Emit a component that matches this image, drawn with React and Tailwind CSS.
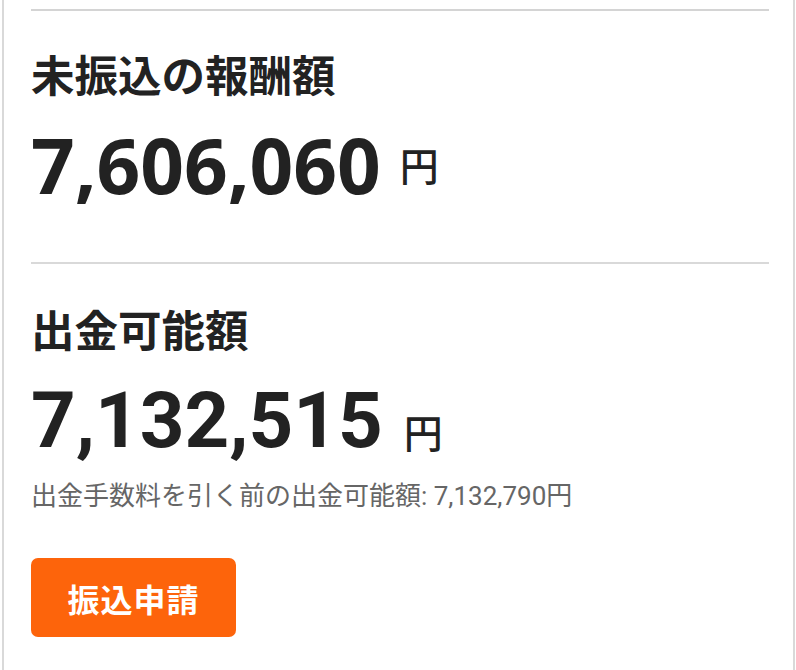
export default function App() {
  const cjk = { fontFamily: '"Noto Sans CJK JP", sans-serif' };
  return (
    <div className="w-[796px] h-[670px] bg-white overflow-hidden">
      <div className="ml-[2px] mr-[1px] h-full border-l-2 border-r-2 border-[#d9d9d9] pl-[27px] pr-[24px] pt-[9px]" style={cjk}>
        <div className="h-[2px] bg-[#d4d4d4]" />
        <div className="mt-[39px] text-[43.5px] leading-[48px] font-bold text-[#222]">未振込の報酬額</div>
        <div className="mt-[26px] flex items-end">
          <span className="text-[76.5px] leading-[80px] font-bold text-[#222]" style={{ fontFamily: '"Open Sans", sans-serif' }}>7,606,060</span>
          <span className="ml-[19px] mb-[16px] text-[39px] leading-[48px] font-medium text-[#222]">円</span>
        </div>
        <div className="mt-[58px] h-[2px] bg-[#d9d9d9]" />
        <div className="mt-[41px] text-[43.5px] leading-[48px] font-bold text-[#222]">出金可能額</div>
        <div className="mt-[28px] flex items-end">
          <span className="text-[78px] leading-[80px] font-bold text-[#222]" style={{ fontFamily: 'Roboto, sans-serif' }}>7,132,515</span>
          <span className="ml-[21px] mb-[6px] text-[39px] leading-[48px] font-medium text-[#222]">円</span>
        </div>
        <div className="mt-[17px] text-[26px] leading-[36px] text-[#666]" style={{ fontFamily: 'Roboto, "Noto Sans CJK JP", sans-serif' }}>出金手数料を引く前の出金可能額: 7,132,790円</div>
        <button className="mt-[44px] w-[205px] h-[79px] rounded-[7px] bg-[#fd640b] text-white text-[32px] font-bold tracking-[1px] flex items-center justify-center">振込申請</button>
      </div>
    </div>
  );
}
